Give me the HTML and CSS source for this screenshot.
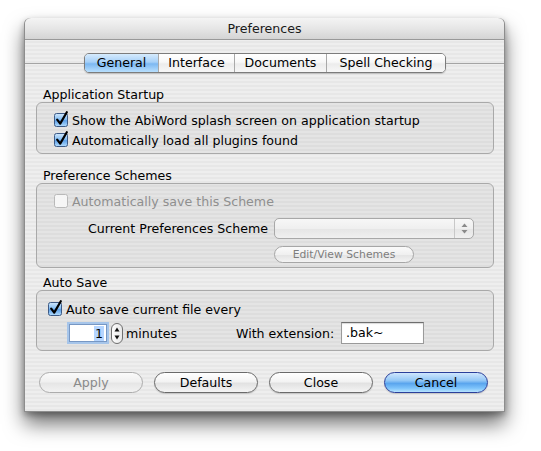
FILE: index.html
```html
<!DOCTYPE html>
<html>
<head>
<meta charset="utf-8">
<title>Preferences</title>
<link rel="stylesheet" href="styles.css">
</head>
<body>
<div class="window">
  <div class="titlebar">Preferences</div>
  <div class="content">
    <div class="tabrow">
      <div class="tabs">
        <div class="tab tab-general selected">General</div>
        <div class="tab tab-interface">Interface</div>
        <div class="tab tab-documents">Documents</div>
        <div class="tab tab-spell">Spell Checking</div>
      </div>
    </div>

    <div class="section-label label-startup">Application Startup</div>
    <div class="group group-startup">
      <div class="check-row indent-a">
        <svg class="cb" width="15" height="16" viewBox="0 0 15 16">
          <defs>
            <linearGradient id="cbg" x1="0" y1="0" x2="0" y2="1">
              <stop offset="0" stop-color="#d2e8fc"/>
              <stop offset="0.45" stop-color="#86bff3"/>
              <stop offset="0.55" stop-color="#5c9fe8"/>
              <stop offset="1" stop-color="#b5defd"/>
            </linearGradient>
          </defs>
          <rect x="0.5" y="2.5" width="13" height="13" rx="2" fill="url(#cbg)" stroke="#3d5a86"/>
          <path d="M3.2 8.6 L6.2 12.6 L12.8 1.2" fill="none" stroke="#000" stroke-width="2.2" stroke-linecap="round" stroke-linejoin="round"/>
        </svg>
        <span>Show the AbiWord splash screen on application startup</span>
      </div>
      <div class="check-row indent-a">
        <svg class="cb" width="15" height="16" viewBox="0 0 15 16">
          <rect x="0.5" y="2.5" width="13" height="13" rx="2" fill="url(#cbg)" stroke="#3d5a86"/>
          <path d="M3.2 8.6 L6.2 12.6 L12.8 1.2" fill="none" stroke="#000" stroke-width="2.2" stroke-linecap="round" stroke-linejoin="round"/>
        </svg>
        <span>Automatically load all plugins found</span>
      </div>
    </div>

    <div class="section-label label-schemes">Preference Schemes</div>
    <div class="group group-schemes">
      <div class="check-row indent-a disabled">
        <svg class="cb" width="15" height="16" viewBox="0 0 15 16">
          <rect x="0.5" y="2.5" width="13" height="13" rx="2" fill="#f6f6f6" stroke="#b9b9b9"/>
        </svg>
        <span>Automatically save this Scheme</span>
      </div>
      <div class="scheme-row">
        <span class="scheme-label">Current Preferences Scheme</span>
        <div class="popup">
          <div class="popup-arrows">
            <svg width="7" height="11" viewBox="0 0 7 11">
              <path d="M3.5 0.5 L6.5 4 L0.5 4 Z" fill="#8a8a8a"/>
              <path d="M3.5 10.5 L6.5 7 L0.5 7 Z" fill="#8a8a8a"/>
            </svg>
          </div>
        </div>
      </div>
      <div class="edit-row">
        <div class="small-button">Edit/View Schemes</div>
      </div>
    </div>

    <div class="section-label label-autosave">Auto Save</div>
    <div class="group group-autosave">
      <div class="check-row indent-b">
        <svg class="cb" width="15" height="16" viewBox="0 0 15 16">
          <rect x="0.5" y="2.5" width="13" height="13" rx="2" fill="url(#cbg)" stroke="#3d5a86"/>
          <path d="M3.2 8.6 L6.2 12.6 L12.8 1.2" fill="none" stroke="#000" stroke-width="2.2" stroke-linecap="round" stroke-linejoin="round"/>
        </svg>
        <span>Auto save current file every</span>
      </div>
      <div class="field-row">
        <div class="number-field"><span class="sel">1</span></div>
        <div class="stepper">
          <svg width="8" height="17" viewBox="0 0 8 17">
            <path d="M4 2.5 L6.5 6.5 L1.5 6.5 Z" fill="#111"/>
            <path d="M4 14.5 L6.5 10.5 L1.5 10.5 Z" fill="#111"/>
          </svg>
        </div>
        <span class="minutes">minutes</span>
        <span class="ext-label">With extension:</span>
        <div class="text-field">.bak~</div>
      </div>
    </div>

    <div class="button-row">
      <div class="button disabled-button">Apply</div>
      <div class="button">Defaults</div>
      <div class="button">Close</div>
      <div class="button default-button">Cancel</div>
    </div>
  </div>
</div>
</body>
</html>
```

FILE: styles.css
```css
* { box-sizing: border-box; }
html, body { margin: 0; padding: 0; background: #ffffff; }
body {
  font-family: "DejaVu Sans", "Liberation Sans", sans-serif;
  font-size: 12.6px;
  color: #000;
  padding: 18px 0 40px 24px;
  min-height: 451px;
}

.window {
  width: 481px;
  height: 394px;
  border-radius: 6px 6px 0 0;
  border: 1px solid #8d8d8d;
  border-top-color: #a9a9a9;
  background-color: #eaeaea;
  background-image: repeating-linear-gradient(to bottom, #eeeeee 0px, #eeeeee 2px, #e7e7e7 2px, #e7e7e7 4px);
  box-shadow: 0 12px 20px 0 rgba(0, 0, 0, 0.55), 0 3px 6px 0 rgba(0, 0, 0, 0.3);
  display: flex;
  flex-direction: column;
}

.titlebar {
  height: 22px;
  flex: none;
  margin-top: -1px;
  border-radius: 6px 6px 0 0;
  background: linear-gradient(to bottom, #f4f4f4 0%, #e6e6e6 50%, #d4d4d4 100%);
  border-bottom: 1px solid #999999;
  text-align: center;
  line-height: 22px;
  color: #1a1a1a;
}

.content {
  padding: 0 10px 0 11px;
  display: flex;
  flex-direction: column;
}

.tabrow {
  margin: 13px -10px 0 -11px;
  height: 20px;
  display: flex;
  justify-content: center;
  background: linear-gradient(#a4a4a4, #a4a4a4) 0 10px / 100% 1px no-repeat;
}
.tabs {
  display: flex;
  height: 20px;
  border: 1px solid #7c7c7c;
  border-radius: 5px;
  overflow: hidden;
  box-shadow: 0 1px 1px rgba(0, 0, 0, 0.18);
  margin-left: 1px;
}
.tab {
  height: 18px;
  line-height: 18px;
  text-align: center;
  background: linear-gradient(to bottom, #ffffff 0%, #f8f8f8 45%, #ececec 55%, #f7f7f7 100%);
  border-left: 1px solid #a9a9a9;
}
.tab-general { width: 73px; border-left: none; }
.tab-interface { width: 76px; }
.tab-documents { width: 92px; }
.tab-spell { width: 119px; }
.tab.selected {
  background: linear-gradient(to bottom, #d6ebfd 0%, #a6d0f8 45%, #7cb8f2 55%, #b8dffd 100%);
}

.section-label {
  height: 15px;
  line-height: 15px;
  padding-left: 7px;
}
.label-startup { margin-top: 14px; }
.label-schemes { margin-top: 14px; }
.label-autosave { margin-top: 7px; }

.group {
  border: 1px solid #a9a9a9;
  border-radius: 6px;
  background: rgba(0, 0, 0, 0.04);
  display: flex;
  flex-direction: column;
}
.group-startup { height: 52px; padding-top: 7px; }
.group-schemes { height: 85px; padding-top: 7px; }
.group-autosave { height: 61px; padding-top: 8px; }

.check-row {
  height: 20px;
  display: flex;
  align-items: center;
  gap: 3px;
}
.indent-a { padding-left: 17px; }
.indent-b { padding-left: 11px; }
.cb { flex: none; margin-top: -3px; }
.disabled { color: #8f8f8f; }

.scheme-row {
  margin-top: 7px;
  height: 21px;
  display: flex;
  align-items: center;
}
.scheme-label {
  width: 232px;
  text-align: right;
  padding-right: 1px;
}
.popup {
  margin-left: 5px;
  width: 200px;
  height: 21px;
  border: 1px solid #a8a8a8;
  border-radius: 5px;
  background: linear-gradient(to bottom, #f7f7f7 0%, #efefef 50%, #e6e6e6 55%, #f0f0f0 100%);
  display: flex;
  justify-content: flex-end;
}
.popup-arrows {
  width: 19px;
  border-left: 1px solid #c8c8c8;
  display: flex;
  align-items: center;
  justify-content: center;
}

.edit-row {
  margin-top: 7px;
  padding-left: 237px;
}
.small-button {
  width: 140px;
  height: 17px;
  line-height: 15px;
  border: 1px solid #a6a6a6;
  border-radius: 9px;
  background: linear-gradient(to bottom, #fafafa 0%, #f0f0f0 50%, #e4e4e4 55%, #f3f3f3 100%);
  text-align: center;
  font-size: 10.8px;
  color: #7d7d7d;
}

.field-row {
  margin-top: 3px;
  height: 22px;
  display: flex;
  align-items: center;
  padding-left: 30px;
}
.number-field {
  width: 42px;
  height: 22px;
  border: 2px solid #a6c5ea;
  box-shadow: inset 0 0 0 1px #7797c3;
  background: #fff;
  text-align: right;
  padding: 2px 3px 0 0;
  line-height: 15px;
}
.sel { background: #b5d5ff; padding: 0 1px; }
.stepper {
  margin-left: 2px;
  width: 12px;
  height: 21px;
  border: 1px solid #6f6f6f;
  border-radius: 6px;
  background: linear-gradient(to right, #fdfdfd, #e8e8e8);
  display: flex;
  align-items: center;
  justify-content: center;
}
.minutes { width: 113px; padding-left: 3px; }
.ext-label { width: 105px; }
.text-field {
  width: 83px;
  height: 22px;
  background: #fff;
  border: 1px solid #9a9a9a;
  border-top-color: #6e6e6e;
  box-shadow: inset 0 1px 1px rgba(0, 0, 0, 0.15);
  padding-left: 4px;
  line-height: 20px;
}

.button-row {
  margin-top: 21px;
  padding-left: 3px;
  display: flex;
  gap: 11px;
}
.button {
  width: 104px;
  height: 21px;
  border: 1px solid #6a6a6a;
  border-radius: 11px;
  background: linear-gradient(to bottom, #ffffff 0%, #f3f3f3 45%, #e2e2e2 55%, #f4f4f4 100%);
  box-shadow: 0 1px 1px rgba(0, 0, 0, 0.15);
  text-align: center;
  line-height: 19px;
}
.disabled-button {
  border-color: #acacac;
  color: #8a8a8a;
  background: linear-gradient(to bottom, #fafafa 0%, #f0f0f0 45%, #e6e6e6 55%, #f2f2f2 100%);
  box-shadow: none;
}
.default-button {
  border-color: #2b3f9a;
  background: linear-gradient(to bottom, #cfe6fd 0%, #93c7f6 40%, #5aa5ee 55%, #7ec4fb 80%, #b7e3fe 100%);
}
```
